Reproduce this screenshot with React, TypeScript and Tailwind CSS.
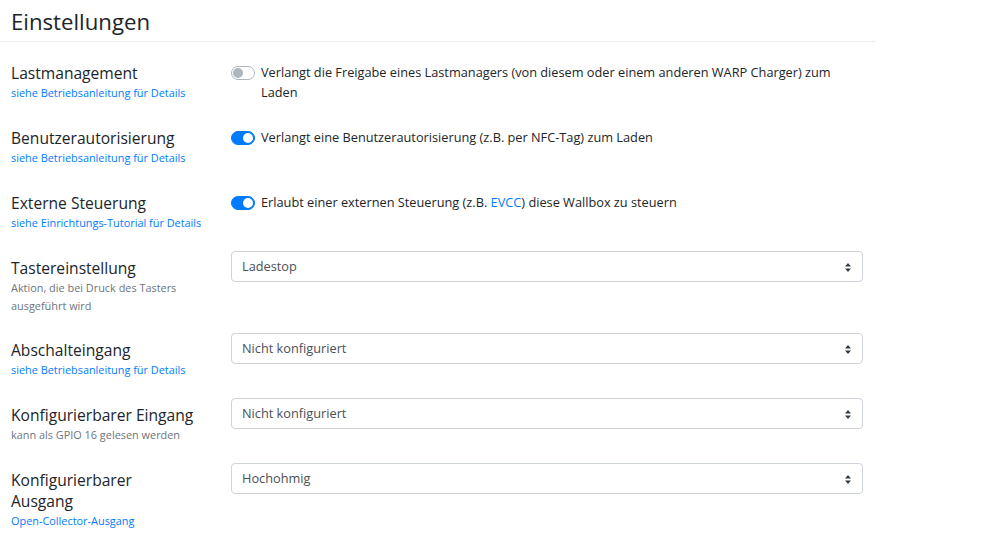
type Row = {
  title: string[];
  hint: string[];
  hintColor: "link" | "muted";
  control:
    | { kind: "switch"; on: boolean; text: React.ReactNode }
    | { kind: "select"; value: string };
};

const rows: Row[] = [
  {
    title: ["Lastmanagement"],
    hint: ["siehe Betriebsanleitung für Details"],
    hintColor: "link",
    control: {
      kind: "switch",
      on: false,
      text: "Verlangt die Freigabe eines Lastmanagers (von diesem oder einem anderen WARP Charger) zum Laden",
    },
  },
  {
    title: ["Benutzerautorisierung"],
    hint: ["siehe Betriebsanleitung für Details"],
    hintColor: "link",
    control: {
      kind: "switch",
      on: true,
      text: "Verlangt eine Benutzerautorisierung (z.B. per NFC-Tag) zum Laden",
    },
  },
  {
    title: ["Externe Steuerung"],
    hint: ["siehe Einrichtungs-Tutorial für Details"],
    hintColor: "link",
    control: {
      kind: "switch",
      on: true,
      text: (
        <>
          Erlaubt einer externen Steuerung (z.B. <span className="text-[#007bff]">EVCC</span>) diese Wallbox zu steuern
        </>
      ),
    },
  },
  {
    title: ["Tastereinstellung"],
    hint: ["Aktion, die bei Druck des Tasters", "ausgeführt wird"],
    hintColor: "muted",
    control: { kind: "select", value: "Ladestop" },
  },
  {
    title: ["Abschalteingang"],
    hint: ["siehe Betriebsanleitung für Details"],
    hintColor: "link",
    control: { kind: "select", value: "Nicht konfiguriert" },
  },
  {
    title: ["Konfigurierbarer Eingang"],
    hint: ["kann als GPIO 16 gelesen werden"],
    hintColor: "muted",
    control: { kind: "select", value: "Nicht konfiguriert" },
  },
  {
    title: ["Konfigurierbarer", "Ausgang"],
    hint: ["Open-Collector-Ausgang"],
    hintColor: "link",
    control: { kind: "select", value: "Hochohmig" },
  },
];

function Switch({ on }: { on: boolean }) {
  return (
    <span
      className={`mt-[3px] flex h-[14px] w-[24px] shrink-0 items-center rounded-full border px-[1px] ${
        on ? "justify-end border-[#007bff] bg-[#007bff]" : "justify-start border-[#adb5bd] bg-white"
      }`}
    >
      <span className={`h-[10px] w-[10px] rounded-full ${on ? "bg-white" : "bg-[#adb5bd]"}`} />
    </span>
  );
}

function SelectBox({ value }: { value: string }) {
  return (
    <div className="flex h-[31px] items-center justify-between rounded-[4px] border border-[#ced4da] bg-white pl-[10px] pr-[11px] pt-[1px] text-[12.75px] text-[#495057]">
      <span>{value}</span>
      <svg width="6" height="9" viewBox="0 0 4 5" preserveAspectRatio="none">
        <path d="M2 0L0 2h4zm0 5L0 3h4z" fill="#343a40" />
      </svg>
    </div>
  );
}

export default function App() {
  return (
    <div className="min-h-[551px] bg-white text-[#212529]" style={{ fontFamily: '"Open Sans", sans-serif' }}>
      <div className="w-[876px]">
        <div className="border-b border-[#eeeeee] pb-[2px] pl-[11px] pt-[5px]">
          <h1 className="text-[22.2px] leading-[34px]">Einstellungen</h1>
        </div>

        <div className="mt-[14px] flex flex-col gap-[19px] pl-[11px]">
          {rows.map((row) => (
            <div key={row.title.join(" ")} className="flex">
              <div className="w-[220px] shrink-0 pr-[20px] pt-[7px]">
                <div className="text-[15.6px] leading-[21px]">
                  {row.title.map((t) => (
                    <div key={t}>{t}</div>
                  ))}
                </div>
                <div
                  className={`text-[10.9px] ${row.hint.length > 1 ? "leading-[17.5px]" : "leading-[18px]"} ${
                    row.hintColor === "link" ? "text-[#007bff]" : "text-[#6c757d]"
                  }`}
                >
                  {row.hint.map((h) => (
                    <div key={h}>{h}</div>
                  ))}
                </div>
              </div>

              <div className="w-[632px] shrink-0">
                {row.control.kind === "switch" ? (
                  <div className="flex gap-[6px] pt-[7px] text-[12.75px] leading-[19.5px]">
                    <Switch on={row.control.on} />
                    <span className="pr-[20px]">{row.control.text}</span>
                  </div>
                ) : (
                  <SelectBox value={row.control.value} />
                )}
              </div>
            </div>
          ))}
        </div>
      </div>
    </div>
  );
}
